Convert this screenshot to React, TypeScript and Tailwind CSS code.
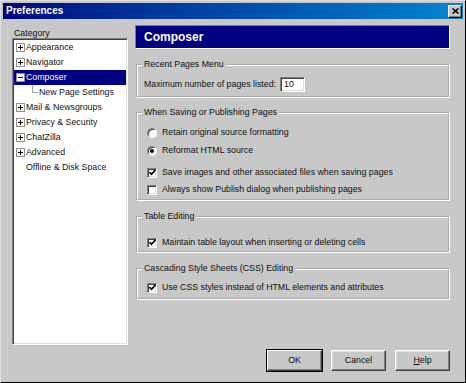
import React from 'react';

const categories = [
  { label: 'Appearance', kind: 'plus' },
  { label: 'Navigator', kind: 'plus' },
  { label: 'Composer', kind: 'minus', selected: true },
  { label: 'New Page Settings', kind: 'child' },
  { label: 'Mail & Newsgroups', kind: 'plus' },
  { label: 'Privacy & Security', kind: 'plus' },
  { label: 'ChatZilla', kind: 'plus' },
  { label: 'Advanced', kind: 'plus' },
  { label: 'Offline & Disk Space', kind: 'leaf' },
];

const sunken =
  'border-t border-l border-b border-r border-t-[#808080] border-l-[#808080] border-b-white border-r-white shadow-[inset_1px_1px_0_#404040,inset_-1px_-1px_0_#dfdfdf]';

const groupBox =
  'min-w-0 border-2 border-white [border-style:groove] ml-[1px] pl-[6px] pr-[6px]';

const ExpandBox = ({ open }: { open: boolean }) => (
  <span className="relative w-[9px] h-[9px] shrink-0 bg-white border border-[#909090] flex items-center justify-center">
    <span className="absolute w-[5px] h-[1px] bg-black" />
    {!open && <span className="absolute w-[1px] h-[5px] bg-black" />}
  </span>
);

const Radio = ({ checked }: { checked?: boolean }) => (
  <span className="w-[12px] flex justify-center shrink-0">
    <span className="w-[10px] h-[10px] rounded-full bg-white border border-t-[#808080] border-l-[#808080] border-b-white border-r-white shadow-[inset_1px_1px_0_#404040] flex items-center justify-center">
      {checked && <span className="w-[4px] h-[4px] rounded-full bg-black" />}
    </span>
  </span>
);

const Check = ({ checked }: { checked?: boolean }) => (
  <span className="w-[12px] flex justify-center shrink-0">
    <span className={`w-[10px] h-[10px] bg-white flex items-center justify-center ${sunken}`}>
      {checked && (
        <svg width="7" height="7" viewBox="0 0 7 7">
          <path d="M0.5 3 L2.5 5.2 L6.5 0.8" fill="none" stroke="#000" strokeWidth="1.6" />
        </svg>
      )}
    </span>
  </span>
);

const Row = ({ children, className = '' }: { children: React.ReactNode; className?: string }) => (
  <div className={`h-[13px] flex items-center gap-[4px] pl-[2px] ${className}`}>{children}</div>
);

const Legend = ({ children }: { children: React.ReactNode }) => (
  <legend className="-ml-[2px] px-[2px] text-[8.8px] leading-[11px]">{children}</legend>
);

const Button = ({ children, isDefault }: { children: React.ReactNode; isDefault?: boolean }) => (
  <button
    className={`w-[55px] h-[21px] bg-[#c8c8c8] text-[8.8px] border border-t-white border-l-white border-b-[#404040] border-r-[#404040] ${
      isDefault
        ? 'shadow-[inset_-1px_-1px_0_#808080,0_0_0_1px_#000]'
        : 'shadow-[inset_-1px_-1px_0_#808080,inset_1px_1px_0_#dfdfdf]'
    }`}
  >
    {children}
  </button>
);

export default function App() {
  return (
    <div className="w-[466px] h-[383px] bg-[#c8c8c8] p-[2px] flex flex-col text-[#111] font-['Liberation_Sans',Arial,sans-serif] border border-t-[#dfdfdf] border-l-[#dfdfdf] border-b-black border-r-black">
      {/* title bar */}
      <div className="h-[16px] shrink-0 flex items-center justify-between pl-[3px] pr-[1px] bg-gradient-to-r from-[#000080] to-[#1084d0]">
        <span className="text-white font-bold text-[10px] leading-none">Preferences</span>
        <span className="w-[14px] h-[13px] bg-[#c8c8c8] flex items-center justify-center border border-t-white border-l-white border-b-black border-r-black shadow-[inset_-1px_-1px_0_#808080]">
          <svg width="7" height="6" viewBox="0 0 7 6">
            <path d="M0.5 0.5 L6.5 5.5 M6.5 0.5 L0.5 5.5" stroke="#000" strokeWidth="1.6" />
          </svg>
        </span>
      </div>

      <div className="flex gap-[7px] pl-[9px] pr-[13px] pt-[6px]">
        {/* category tree */}
        <div className="w-[116px] flex flex-col shrink-0">
          <div className="h-[13px] pt-[3px] pl-[2px] text-[8.8px] leading-[11px]">Category</div>
          <div className={`h-[307px] bg-white ${sunken} p-[1px]`}>
            {categories.map((c) => (
              <div
                key={c.label}
                className={`h-[15px] flex items-center text-[8.8px] ${
                  c.selected ? 'bg-[#000080] text-white' : ''
                } ${c.kind === 'child' ? 'pl-[18px]' : c.kind === 'leaf' ? 'pl-[12px]' : 'pl-[2px]'}`}
              >
                {c.kind === 'child' && (
                  <span className="w-[6px] h-[8px] -mt-[7px] mr-[1px] border-l border-b border-[#a0a0a0]" />
                )}
                {(c.kind === 'plus' || c.kind === 'minus') && (
                  <span className="mr-[1px]">
                    <ExpandBox open={c.kind === 'minus'} />
                  </span>
                )}
                <span className="whitespace-nowrap">{c.label}</span>
              </div>
            ))}
          </div>
        </div>

        {/* composer panel */}
        <div className="flex-1 flex flex-col">
          <div className="h-[24px] bg-[#000080] flex items-center pl-[8px] border border-t-[#808080] border-l-[#808080] border-b-white border-r-white">
            <span className="text-white font-bold text-[12px]">Composer</span>
          </div>

          <fieldset className={`${groupBox} mt-[10px] pt-[7px] pb-[4px]`}>
            <Legend>Recent Pages Menu</Legend>
            <div className="flex items-center gap-[4px] text-[8.8px]">
              <span>Maximum number of pages listed:</span>
              <span className={`w-[25px] h-[15px] bg-white pl-[3px] flex items-center ${sunken}`}>10</span>
            </div>
          </fieldset>

          <fieldset className={`${groupBox} mt-[9px] pt-[8px] pb-[3px] text-[8.8px]`}>
            <Legend>When Saving or Publishing Pages</Legend>
            <Row>
              <Radio />
              <span>Retain original source formatting</span>
            </Row>
            <Row className="mt-[5px]">
              <Radio checked />
              <span>Reformat HTML source</span>
            </Row>
            <Row className="mt-[9px]">
              <Check checked />
              <span>Save images and other associated files when saving pages</span>
            </Row>
            <Row className="mt-[4px]">
              <Check />
              <span>Always show Publish dialog when publishing pages</span>
            </Row>
          </fieldset>

          <fieldset className={`${groupBox} mt-[10px] pt-[14px] pb-[2px] text-[8.8px]`}>
            <Legend>Table Editing</Legend>
            <Row>
              <Check checked />
              <span>Maintain table layout when inserting or deleting cells</span>
            </Row>
          </fieldset>

          <fieldset className={`${groupBox} mt-[10px] pt-[7px] pb-[4px] text-[8.8px]`}>
            <Legend>Cascading Style Sheets (CSS) Editing</Legend>
            <Row>
              <Check checked />
              <span>Use CSS styles instead of HTML elements and attributes</span>
            </Row>
          </fieldset>
        </div>
      </div>

      <div className="flex justify-end gap-[9px] pr-[13px] mt-[5px]">
        <Button isDefault>OK</Button>
        <Button>Cancel</Button>
        <Button>
          <span className="underline">H</span>elp
        </Button>
      </div>
    </div>
  );
}
